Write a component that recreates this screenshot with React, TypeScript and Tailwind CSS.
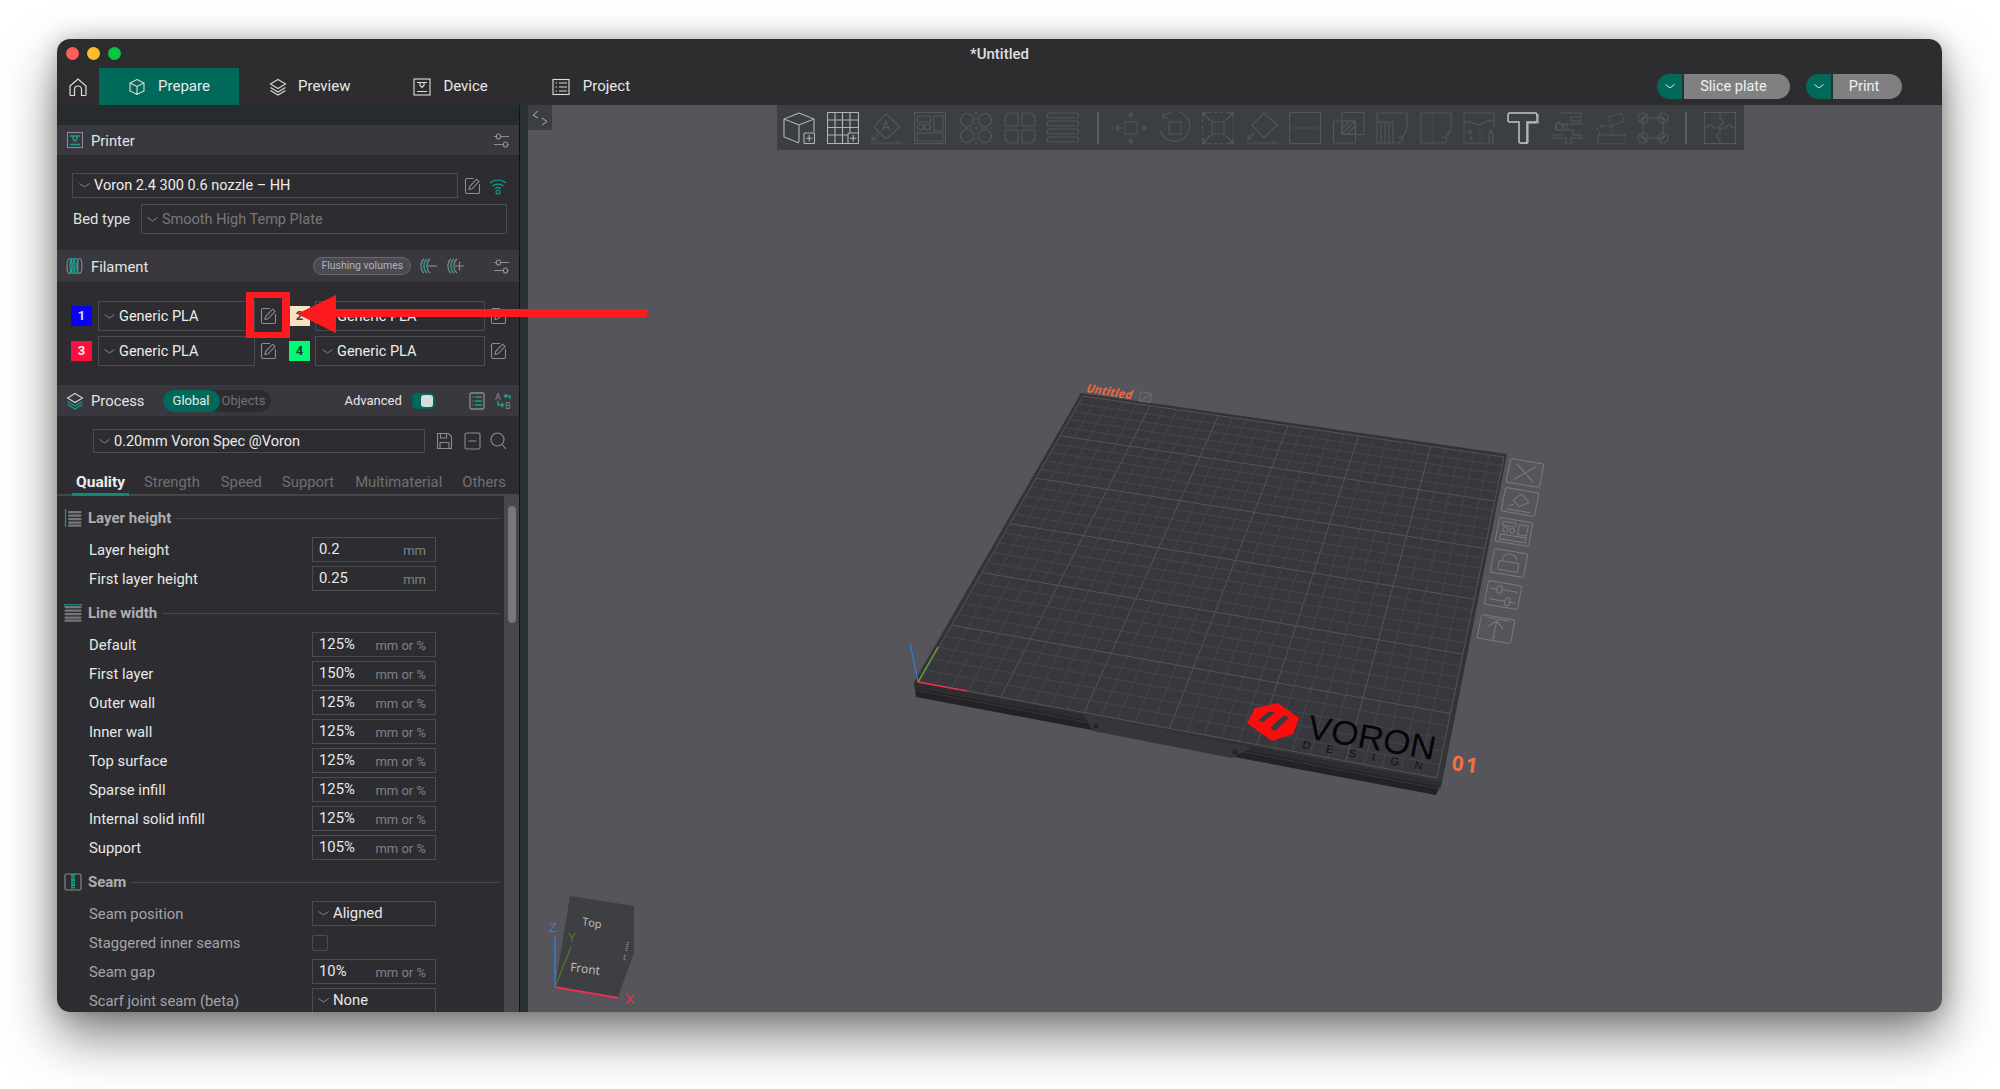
import type { ReactNode } from 'react';

const DIM = '#54575a';
const LIT = '#b4b4b4';

function Chevron() {
  return (
    <svg width="11" height="5" viewBox="0 0 11 5" fill="none" className="shrink-0">
      <path d="M0.5 0.5 5.5 4l5-3.5" stroke="#85858a" />
    </svg>
  );
}

function EditIcon() {
  return (
    <svg width="17" height="18" viewBox="0 0 17 18" fill="none" stroke="#8c8c90" strokeWidth="1.1">
      <path d="M10 1.5H3A1.5 1.5 0 0 0 1.5 3v12A1.5 1.5 0 0 0 3 16.5h11a1.5 1.5 0 0 0 1.5-1.5V7" />
      <path d="M5 12.5l.6-3L12.6 2.2l2.4 2.4-7 7.2z" />
    </svg>
  );
}

function SlidersIcon() {
  return (
    <svg width="17" height="17" viewBox="0 0 17 17" fill="none" stroke="#8f8f93" strokeWidth="1.1">
      <path d="M1 4.5h2.5M7.5 4.5H16M1 12.5h9.5M14.5 12.5H16" />
      <rect x="3.5" y="2" width="4" height="5" rx="2" />
      <rect x="10.5" y="10" width="4" height="5" rx="2" />
    </svg>
  );
}

function Ic({ size = 18, children }: { size?: number; children: ReactNode }) {
  return (
    <svg width={size} height={size} viewBox="0 0 18 18" fill="none" strokeWidth="1.1" className="shrink-0">
      {children}
    </svg>
  );
}

function PrinterIcon() {
  return (
    <Ic>
      <rect x="1.5" y="1.5" width="15" height="15" stroke="#8c8c90" />
      <path d="M4 5h10M7 5v3l2 2 2-2V5M4 13.5h10" stroke="#13a08c" strokeWidth="1.5" />
    </Ic>
  );
}

function FilamentIcon() {
  return (
    <Ic>
      <ellipse cx="3.5" cy="9" rx="2.5" ry="7.5" stroke="#8c8c90" />
      <ellipse cx="6.5" cy="9" rx="2.5" ry="7.5" stroke="#13a08c" strokeWidth="1.4" />
      <ellipse cx="9.5" cy="9" rx="2.5" ry="7.5" stroke="#13a08c" strokeWidth="1.4" />
      <ellipse cx="13.5" cy="9" rx="2.5" ry="7.5" stroke="#8c8c90" />
    </Ic>
  );
}

function FilamentEditIcon({ plus }: { plus?: boolean }) {
  return (
    <Ic>
      <path d="M5 2C1 5 1 13 5 16" stroke="#8c8c90" />
      <path d="M8 2C4 5 4 13 8 16" stroke="#13a08c" strokeWidth="1.6" />
      <path d="M11 2C7 5 7 13 11 16" stroke="#8c8c90" />
      <path d={plus ? 'M9 9h9M13.5 4.5v9' : 'M9 9h9'} stroke="#8c8c90" />
    </Ic>
  );
}

function LayersIcon({ accent = '#d6d6d6' }: { accent?: string }) {
  return (
    <Ic>
      <path d="M9 1.5 16.5 6 9 10.5 1.5 6z" stroke="#d6d6d6" />
      <path d="M1.5 9.5 9 14l7.5-4.5" stroke={accent} />
      <path d="M1.5 12.5 9 17l7.5-4.5" stroke={accent} />
    </Ic>
  );
}

function SectionIcon({ kind }: { kind: 'layer' | 'line' | 'seam' }) {
  if (kind === 'seam') {
    return (
      <Ic>
        <rect x="1" y="1" width="16" height="16" rx="1.5" stroke="#8c8c90" />
        <path d="M7 2h4M7 4.5h4M7 7h4M7 9.5h4M7 12h4M7 14.5h4" stroke="#0f9c88" strokeWidth="1.8" />
      </Ic>
    );
  }
  return (
    <Ic>
      {[3, 6.5, 10, 13.5, 16.5].map((y) => (
        <rect key={y} x={kind === 'layer' ? 4 : 0.5} y={y - 1} width={kind === 'layer' ? 13.5 : 17} height="2.2" rx="1" fill="#77777b" />
      ))}
      {kind === 'layer' ? (
        <path d="M1.5 1v16M.5 1h2M.5 17h2" stroke="#13a08c" />
      ) : (
        <path d="M.5 .7h17M.5 0v1.5M17.5 0v1.5" stroke="#13a08c" />
      )}
    </Ic>
  );
}

function Select({ text, w, dim, pad = 5 }: { text: string; w: string; dim?: boolean; pad?: number }) {
  return (
    <div className={`flex h-full items-center gap-[4px] border border-[#4b4b50] text-[14.5px] ${w} ${dim ? 'text-[#77777b]' : 'text-[#ececec]'}`} style={{ paddingLeft: pad }}>
      <Chevron />
      <span className="whitespace-nowrap pt-[1px]">{text}</span>
    </div>
  );
}

function SectionHead({ icon, title, height, tight, children }: { icon: ReactNode; title: string; height: string; tight?: boolean; children?: ReactNode }) {
  return (
    <div className={`flex shrink-0 items-center bg-[#38383e] pl-[9px] ${height}`}>
      {icon}
      <span className={`ml-[7px] text-[14.8px] text-[#e4e4e4] ${tight ? 'pt-[1px]' : 'pt-[3px]'}`}>{title}</span>
      {children}
    </div>
  );
}

function Swatch({ n, bg, fg }: { n: number; bg: string; fg: string }) {
  return (
    <div className={`flex h-[20px] w-[21px] shrink-0 items-center justify-center text-[13px] font-bold ${bg} ${fg}`}>{n}</div>
  );
}

function FilamentRow({ a, b }: { a: [number, string, string]; b: [number, string, string] }) {
  return (
    <div className="flex h-[30px] items-center pl-[14px]">
      <Swatch n={a[0]} bg={a[1]} fg={a[2]} />
      <div className="ml-[6px] h-full"><Select text="Generic PLA" w="w-[157px]" /></div>
      <div className="ml-[5px] w-[17px]"><EditIcon /></div>
      <div className="ml-[12px]"><Swatch n={b[0]} bg={b[1]} fg={b[2]} /></div>
      <div className="ml-[5px] h-full"><Select text="Generic PLA" w="w-[170px]" pad={6} /></div>
      <div className="ml-[5px] w-[17px]"><EditIcon /></div>
    </div>
  );
}

function GroupHead({ kind, title }: { kind: 'layer' | 'line' | 'seam'; title: string }) {
  return (
    <div className="mt-[10px] mb-[7px] flex h-[24px] items-center pl-[7px] pr-[5px]">
      <SectionIcon kind={kind} />
      <span className="ml-[6px] text-[15px] font-bold text-[#adadb0]">{title}</span>
      <div className="ml-[5px] h-px flex-1 bg-[#48484d]" />
    </div>
  );
}

function Row({ label, dim, children }: { label: string; dim?: boolean; children: ReactNode }) {
  return (
    <div className="mb-[4px] flex h-[25px] items-center pl-[32px]">
      <span className={`w-[223px] whitespace-nowrap pt-[1px] text-[14.8px] ${dim ? 'text-[#a4a4a8]' : 'text-[#e8e8e8]'}`}>{label}</span>
      {children}
    </div>
  );
}

function Field({ label, value, unit, dim }: { label: string; value: string; unit: string; dim?: boolean }) {
  return (
    <Row label={label} dim={dim}>
      <div className="flex h-[25px] w-[124px] items-center justify-between border border-[#4b4b50] pl-[6px] pr-[9px]">
        <span className="-mt-[1px] text-[14.8px] text-[#e8e8e8]">{value}</span>
        <span className="mt-[2px] text-[13px] text-[#808084]">{unit}</span>
      </div>
    </Row>
  );
}

function DropField({ label, value }: { label: string; value: string }) {
  return (
    <Row label={label} dim>
      <div className="flex h-[25px] w-[124px] items-center gap-[4px] border border-[#4b4b50] pl-[5px] text-[14.8px] text-[#e8e8e8]">
        <Chevron />
        <span>{value}</span>
      </div>
    </Row>
  );
}

function Sidebar() {
  return (
    <aside className="flex h-full w-[463px] shrink-0 flex-col overflow-hidden border-r border-[#111214] bg-[#2d2d31]">
      <div className="h-[20px] shrink-0 bg-[#262b2d]" />
      <SectionHead icon={<PrinterIcon />} title="Printer" height="h-[30px]">
        <div className="ml-auto mr-[9px]"><SlidersIcon /></div>
      </SectionHead>

      <div className="h-[95px] shrink-0 pt-[18px]">
        <div className="flex h-[25px] items-center pl-[15px]">
          <Select text="Voron 2.4 300 0.6 nozzle – HH" w="w-[386px]" pad={6} />
          <div className="ml-[6px]"><EditIcon /></div>
          <svg width="18" height="18" viewBox="0 0 18 18" fill="none" stroke="#0f9c88" strokeWidth="1.1" className="ml-[8px]">
            <path d="M1 6c4.5-4 11.5-4 16 0M3.5 9c3-2.5 8-2.5 11 0M6 11.5c1.8-1.3 4.200-1.300 6 0" />
            <circle cx="9" cy="15" r="2" />
          </svg>
        </div>
        <div className="mt-[6px] flex h-[30px] items-center pl-[16px]">
          <span className="w-[68px] pt-[1px] text-[14.8px] text-[#e0e0e0]">Bed type</span>
          <Select text="Smooth High Temp Plate" w="w-[366px]" dim />
        </div>
      </div>

      <SectionHead icon={<FilamentIcon />} title="Filament" height="h-[32px]">
        <div className="ml-[165px] flex h-[18px] w-[98px] items-center justify-center rounded-full border border-[#68686d] bg-[#4a4a50] text-[10.5px] text-[#b4b4b8]">Flushing volumes</div>
        <div className="ml-[8px]"><FilamentEditIcon /></div>
        <div className="ml-[9px]"><FilamentEditIcon plus /></div>
        <div className="ml-auto mr-[9px]"><SlidersIcon /></div>
      </SectionHead>

      <div className="flex h-[103px] shrink-0 flex-col gap-[5px] pt-[19px]">
        <FilamentRow a={[1, 'bg-[#0b00f6]', 'text-[#d8d8ff]']} b={[2, 'bg-[#f7e2c4]', 'text-[#44403a]']} />
        <FilamentRow a={[3, 'bg-[#fb0f3c]', 'text-[#ffe4e4]']} b={[4, 'bg-[#00fa78]', 'text-[#15402a]']} />
      </div>

      <SectionHead icon={<LayersIcon accent="#13a08c" />} title="Process" height="h-[31px]" tight>
        <div className="ml-[18px] flex h-[22px] w-[108px] items-center rounded-full bg-[#2c2c30] text-[13px]">
          <span className="flex h-full w-[57px] items-center justify-center rounded-full bg-[#00695a] text-[#ececec]">Global</span>
          <span className="ml-[2px] text-[#727276]">Objects</span>
        </div>
        <span className="ml-[74px] text-[13px] text-[#e6e6e6]">Advanced</span>
        <div className="ml-[10px] flex h-[16px] w-[23px] items-center justify-end rounded-[5px] bg-[#00695a] pr-[2px]">
          <div className="h-[12px] w-[12px] rounded-[3px] bg-[#d6dedc]" />
        </div>
        <svg width="16" height="18" viewBox="0 0 16 18" fill="none" stroke="#8c8c90" strokeWidth="1.3" className="ml-[34px]">
          <rect x="1" y="1" width="14" height="16" rx="1.5" />
          <path d="M3.5 5h1M6 5h7M3.5 9h1M6 9h7M3.5 13h1M6 13h7" stroke="#13a08c" />
        </svg>
        <svg width="17" height="18" viewBox="0 0 17 18" fill="none" strokeWidth="1.5" className="ml-[10px]">
          <text x="0" y="8" fontSize="9" fill="#8c8c90" stroke="none">A</text>
          <text x="10" y="17" fontSize="9" fill="#8c8c90" stroke="none">B</text>
          <path d="M15 7V4H9.5M11.5 2l-2 2 2 2M3 9v4h5.5M6.5 11l2 2-2 2" stroke="#13a08c" />
        </svg>
      </SectionHead>

      <div className="mt-[13px] flex h-[24px] shrink-0 items-center pl-[36px]">
        <Select text="0.20mm Voron Spec @Voron" w="w-[332px]" />
        <svg width="17" height="18" viewBox="0 0 17 18" fill="none" stroke="#8c8c90" strokeWidth="1.1" className="ml-[11px]">
          <path d="M1.5 1.5h11l3 3v12h-14z" />
          <path d="M4.5 1.5v4.5h6V1.5M4 16.5v-6h9v6" />
        </svg>
        <svg width="17" height="18" viewBox="0 0 17 18" fill="none" stroke="#8c8c90" strokeWidth="1.1" className="ml-[11px]">
          <rect x="1" y="1" width="15" height="16" rx="1.5" />
          <path d="M4.5 9h8" />
        </svg>
        <svg width="17" height="18" viewBox="0 0 17 18" fill="none" stroke="#8c8c90" strokeWidth="1.1" className="ml-[9px]">
          <circle cx="7.5" cy="7.5" r="6.5" />
          <path d="M12 12.5l4 4.5" />
        </svg>
      </div>

      <div className="mt-[14px] flex h-[29px] shrink-0 border-b-2 border-[#45454a] pl-[15px] pt-[4px] text-[14.8px] text-[#6f6f74]">
        <div className="-mb-[2px] flex w-[57px] justify-center border-b-[3px] border-[#0f8a78] text-[15.5px] font-bold text-[#ececec]">Quality</div>
        <span className="ml-[15px]">Strength</span>
        <span className="ml-[21px]">Speed</span>
        <span className="ml-[20px]">Support</span>
        <span className="ml-[21px]">Multimaterial</span>
        <span className="ml-[20px]">Others</span>
      </div>

      <div className="flex min-h-0 flex-1">
        <div className="flex-1">
          <GroupHead kind="layer" title="Layer height" />
          <Field label="Layer height" value="0.2" unit="mm" />
          <Field label="First layer height" value="0.25" unit="mm" />
          <GroupHead kind="line" title="Line width" />
          <Field label="Default" value="125%" unit="mm or %" />
          <Field label="First layer" value="150%" unit="mm or %" />
          <Field label="Outer wall" value="125%" unit="mm or %" />
          <Field label="Inner wall" value="125%" unit="mm or %" />
          <Field label="Top surface" value="125%" unit="mm or %" />
          <Field label="Sparse infill" value="125%" unit="mm or %" />
          <Field label="Internal solid infill" value="125%" unit="mm or %" />
          <Field label="Support" value="105%" unit="mm or %" />
          <GroupHead kind="seam" title="Seam" />
          <DropField label="Seam position" value="Aligned" />
          <Row label="Staggered inner seams" dim>
            <div className="h-[16px] w-[16px] rounded-[2px] border border-[#4b4b50]" />
          </Row>
          <Field label="Seam gap" value="10%" unit="mm or %" dim />
          <DropField label="Scarf joint seam (beta)" value="None" />
        </div>
        <div className="w-[15px] shrink-0 bg-[#48484c] pl-[4px] pt-[10px]">
          <div className="h-[117px] w-[8px] rounded-full bg-[#78787c]" />
        </div>
      </div>
    </aside>
  );
}

function ToolIcon({ children, color = DIM, className = '' }: { children: ReactNode; color?: string; className?: string }) {
  return (
    <svg width="32" height="32" viewBox="0 0 32 32" fill="none" stroke={color} strokeWidth="1.1" className={`shrink-0 ${className}`}>
      {children}
    </svg>
  );
}

const PlusBadge = () => (
  <>
    <rect x="21" y="21" width="10.5" height="10.5" rx="1" fill="#3b3f41" />
    <path d="M23 26.2h6.5M26.2 23v6.5" />
  </>
);

const tools: ReactNode[] = [
  <ToolIcon key="a" color={LIT}>
    <path d="M16 1 31 7v13M16 1 1 7v18l15 6M1 7l15 6 15-6M16 13v17" />
    <PlusBadge />
  </ToolIcon>,
  <ToolIcon key="b" color={LIT}>
    <rect x=".5" y=".5" width="31" height="31" rx="1" />
    <path d="M.5 8h31M.5 15.5h31M.5 23h20M8 .5v31M15.5 .5v31M23 .5v20" />
    <PlusBadge />
  </ToolIcon>,
  <ToolIcon key="c">
    <path d="M16 2 30 15 16 27 4 15z" />
    <path d="M12 19l4-10 4 10M13.5 15.5h5M1 31h31M9 21l-7 7M2 23v5h5" />
  </ToolIcon>,
  <ToolIcon key="d">
    <rect x=".5" y=".5" width="31" height="31" />
    <rect x="3" y="4" width="14" height="6" rx="3" />
    <rect x="20" y="4" width="9" height="15" />
    <circle cx="6.5" cy="15" r="3" />
    <circle cx="13.5" cy="15" r="3" />
    <rect x="3" y="21" width="26" height="8" />
  </ToolIcon>,
  <ToolIcon key="e" className="ml-[3px]">
    <circle cx="7" cy="8" r="6.5" />
    <circle cx="25" cy="8" r="6.5" />
    <circle cx="7" cy="24" r="6.5" />
    <circle cx="25" cy="24" r="6.5" />
    <path d="M16 0v32M0 16h32" strokeDasharray="3 2" />
  </ToolIcon>,
  <ToolIcon key="f">
    <path d="M14 1H7a6 6 0 0 0-6 6v7h13zM18 1h7a6 6 0 0 1 6 6v7H18zM14 31H7a6 6 0 0 1-6-6v-7h13zM18 31h7a6 6 0 0 0 6-6v-7H18z" />
  </ToolIcon>,
  <ToolIcon key="g">
    {[1, 9, 17, 25].map((y) => (
      <rect key={y} x=".5" y={y} width="31" height="5" rx="1.5" />
    ))}
  </ToolIcon>,
  <div key="sep1" className="ml-[6px] mr-[5px] h-[32px] w-[2px] shrink-0 bg-[#595c5e]" />,
  <ToolIcon key="h">
    <rect x="10" y="10" width="12" height="12" />
    <path d="M16 1v6M16 25v6M1 16h6M25 16h6M13 4l3-3 3 3M13 28l3 3 3-3M4 13l-3 3 3 3M28 13l3 3-3 3" />
  </ToolIcon>,
  <ToolIcon key="i">
    <rect x="10" y="10" width="12" height="12" />
    <path d="M4 5a15 15 0 1 1-2.5 14M4 1v5h5" />
  </ToolIcon>,
  <ToolIcon key="j">
    <rect x=".5" y=".5" width="31" height="31" strokeDasharray="3 3" />
    <rect x="10" y="10" width="12" height="12" />
    <path d="M1 1l8 8M31 1l-8 8M1 31l8-8M31 31l-8-8M1 6V1h5M26 1h5v5M1 26v5h5M31 26v5h-5" />
  </ToolIcon>,
  <ToolIcon key="k">
    <path d="M18 1 31 13 18 26 6 13z" />
    <path d="M1 31h31M8 21l-6 6M2 23v4h4" />
  </ToolIcon>,
  <ToolIcon key="l">
    <rect x=".5" y=".5" width="31" height="31" rx="1" />
    <path d="M.5 16h31" strokeDasharray="4 2" />
  </ToolIcon>,
  <ToolIcon key="m">
    <rect x="9" y=".5" width="22" height="22" rx="1" />
    <rect x=".5" y="9" width="22" height="22" rx="1" />
    <path d="M10 21l11-11M10 16l6-6M15 21l7-7M9 9h13v13H9z" />
  </ToolIcon>,
  <ToolIcon key="n">
    <path d="M20 31H1V1h30v15M5 31V10M9 31V10M13 31V10M1 10h16v21" />
    <path d="M31 17l-5 9M22 26c3-2 6 0 4 3-1 2-4 2-5 2" />
  </ToolIcon>,
  <ToolIcon key="o">
    <path d="M20 31H1V1h30v15" />
    <path d="M12 2l2 4-2 4 2 4-2 4 2 4-2 4 1 4" strokeDasharray="1.5 1.5" />
    <path d="M31 17l-5 9M22 26c3-2 6 0 4 3-1 2-4 2-5 2" />
  </ToolIcon>,
  <ToolIcon key="p">
    <path d="M24 31H1V1h30v14" />
    <path d="M1 12c6-7 12 4 17 0s9-4 13-3" />
    <circle cx="7" cy="20" r="1.5" />
    <circle cx="8" cy="26" r="1" />
    <path d="M16 20l5-1M16 23l5 0M16 26l5 1" strokeDasharray="1 1" />
    <path d="M26 31v-9l2-4 2 4v9z" />
  </ToolIcon>,
  <ToolIcon key="q" color="#c4c4c4">
    <path d="M2 1h27l1 2v6l-1 1H20v20l-1 1h-6l-1-1V10H2L1 9V3z" strokeWidth="1.5" />
    <path d="M30 3h2v7l-1 1H21v20l-2 1h-5" strokeWidth="1" />
  </ToolIcon>,
  <ToolIcon key="r">
    <path d="M9 1h22v4H21v4h10v3H9M14 12v6h-4a3 3 0 0 1 0-8M17 12v6M13 18h10v5h8v3H21v6h-5v-6H3v-3h10" />
    <circle cx="9" cy="15" r="3.5" />
  </ToolIcon>,
  <ToolIcon key="s">
    <rect x="4" y="23" width="28" height="9" />
    <path d="M14 5l13-4 3 8-13 5zM8 14h10v9M8 14l-5 3 4 6" strokeDasharray="3 1.5" />
  </ToolIcon>,
  <ToolIcon key="t">
    <rect x="6" y="6" width="20" height="20" />
    <circle cx="6" cy="6" r="5" />
    <circle cx="26" cy="6" r="5" />
    <circle cx="6" cy="26" r="5" />
    <circle cx="26" cy="26" r="5" />
    <path d="M3 9l6-6M23 3l6 6M3 23l6 6M23 29l6-6" />
  </ToolIcon>,
  <div key="sep2" className="ml-[4px] mr-[6px] h-[32px] w-[2px] shrink-0 bg-[#595c5e]" />,
  <ToolIcon key="u">
    <rect x=".5" y=".5" width="31" height="31" />
    <path d="M16 1v6a3 3 0 0 1 0 6v3H9a3 3 0 0 0-6 0H1M16 16h6a3 3 0 0 1 6 0h3M16 16v5a3 3 0 0 0 0 6v4" />
  </ToolIcon>,
];

function homography(q: number[][]) {
  const [[x0, y0], [x1, y1], [x2, y2], [x3, y3]] = q;
  const dx1 = x1 - x2, dx2 = x3 - x2, sx = x0 - x1 + x2 - x3;
  const dy1 = y1 - y2, dy2 = y3 - y2, sy = y0 - y1 + y2 - y3;
  const den = dx1 * dy2 - dx2 * dy1;
  const g = (sx * dy2 - dx2 * sy) / den;
  const h = (dx1 * sy - sx * dy1) / den;
  const a = x1 - x0 + g * x1, b = x3 - x0 + h * x3;
  const d = y1 - y0 + g * y1, e = y3 - y0 + h * y3;
  return (u: number, v: number) => {
    const w = g * u + h * v + 1;
    return [(a * u + b * v + x0) / w, (d * u + e * v + y0) / w];
  };
}

const plateMap = homography([[1083, 396], [1504, 457], [1437, 778], [919, 682]]);
const cells = Array.from({ length: 31 }, (_, i) => i);

function lineBetween(p: number[], q: number[]) {
  return { x1: p[0], y1: p[1], x2: q[0], y2: q[1] };
}

const BED_M = 'matrix(0.98,0.16,-0.19,0.98,';

function BedButton({ x, y, children }: { x: number; y: number; children: ReactNode }) {
  return (
    <g transform={`${BED_M}${x},${y})`} fill="none" stroke="#7a7a7f" strokeWidth="1">
      <rect x="-17" y="-12" width="34" height="24" rx="2" />
      {children}
    </g>
  );
}

function Viewport() {
  return (
    <svg width="1414" height="907" viewBox="528 105 1414 907" className="absolute inset-0">
      {/* bed */}
      <path d="M914 682 916 697 1436 795 1442 782z" fill="#232326" />
      <path d="M914 682 915 688 1441 787 1442 782z" fill="#2d2d31" />
      <path d="M915 690 1441 789" stroke="#38383c" strokeWidth="1" />
      <path d="M914 682 1081 393 1507 454 1442 782z" fill="#333338" />
      <path d="M1083 714 1093 731 1232 758 1252 747z" fill="#35353a" />
      <path d="M919 682 1083 396 1504 457 1437 778z" fill="#37373d" />
      {cells.map((i) => {
        const major = i % 5 === 0;
        const color = major ? '#545459' : '#46464c';
        const t = i / 30;
        return (
          <g key={i} stroke={color} strokeWidth="1">
            <line {...lineBetween(plateMap(t, 0), plateMap(t, 1))} />
            <line {...lineBetween(plateMap(0, t), plateMap(1, t))} />
          </g>
        );
      })}
      <circle cx="1096" cy="726" r="2.5" fill="#232326" />
      <circle cx="1235" cy="752" r="2.5" fill="#232326" />

      <line x1="918" y1="682" x2="910" y2="643" stroke="#2f7fd6" strokeWidth="1.2" />
      <line x1="918" y1="682" x2="938" y2="647" stroke="#62b32a" strokeWidth="1.2" />
      <line x1="918" y1="682" x2="967" y2="691" stroke="#e8304f" strokeWidth="1.5" />

      <g transform={`${BED_M}1086,392)`}>
        <text fontFamily="Open Sans, sans-serif" fontSize="12" fontStyle="italic" fontWeight="700" fill="#f0683c">Untitled</text>
        <rect x="54" y="-9" width="11" height="9" fill="none" stroke="#6e6e73" />
        <path d="M55 0l9-8" stroke="#6e6e73" />
      </g>

      {/* logo */}
      <path d="M1278 703 1299 718 1293 734 1272 741 1247 723 1255 708z" fill="#fb0d0d" />
      <path d="M1269 711.5 1275 712.5 1263 722 1258 720.5zM1284 715 1289 718 1275 731 1270 728z" fill="#3a3a40" />
      <g transform="matrix(0.98,0.17,-0.19,0.98,1306,738)">
        <text fontFamily="Liberation Sans, sans-serif" fontSize="34" fill="#060606" textLength="130" lengthAdjust="spacingAndGlyphs">VORON</text>
      </g>
      <g transform="matrix(0.98,0.18,-0.19,0.98,1302,748)">
        <text fontFamily="Liberation Sans, sans-serif" fontSize="11" fill="#101012" letterSpacing="16">DESIGN</text>
      </g>
      <g transform="matrix(0.99,0.12,-0.12,0.99,1451,770)">
        <text fontFamily="Open Sans, sans-serif" fontSize="21" fontWeight="700" fill="#f0703f" letterSpacing="2">01</text>
      </g>

      {/* bed buttons */}
      <BedButton x={1525} y={473}>
        <path d="M-10-8 10 8M10-8-10 8" />
      </BedButton>
      <BedButton x={1520} y={502}>
        <path d="M0-8 9-1 0 5-7-1zM-12 9H12M-6 3-11 6" />
      </BedButton>
      <BedButton x={1514} y={532}>
        <rect x="-13" y="-9" width="14" height="4" rx="2" />
        <rect x="4" y="-8" width="9" height="10" />
        <circle cx="-9" cy="-1" r="2.5" />
        <circle cx="-2" cy="-1" r="2.5" />
        <rect x="-13" y="4" width="26" height="5" />
      </BedButton>
      <BedButton x={1509} y={563}>
        <rect x="-10" y="-1" width="20" height="9" rx="1" />
        <path d="M-7-1v-3a7 5 0 0 1 14 0" />
      </BedButton>
      <BedButton x={1503} y={595}>
        <path d="M-13-5H-7M-2-5H14M-13 6H3M8 6H14" />
        <rect x="-7" y="-9" width="5" height="8" rx="2.5" />
        <rect x="3" y="2" width="5" height="8" rx="2.5" />
      </BedButton>
      <BedButton x={1496} y={629}>
        <path d="M-13-10H11M-1-8V11M-9-1-1-8 7-1" />
      </BedButton>

      {/* view cube */}
      <path d="M570 896 634 906 634 953 618 997 555 987z" fill="#3e3f43" />
      <g transform="matrix(0.98,0.17,-0.1,0.99,582,925)">
        <text fontFamily="Open Sans, sans-serif" fontSize="11" fill="#c4c4c4">Top</text>
      </g>
      <g transform="matrix(0.98,0.13,-0.1,0.99,570,971)">
        <text fontFamily="Open Sans, sans-serif" fontSize="12" fill="#c4c4c4">Front</text>
      </g>
      <path d="M628 942 626 951M625 955 624 961" stroke="#8a8a8e" strokeWidth="2" strokeDasharray="1 1" />
      <line x1="555" y1="987" x2="555" y2="937" stroke="#2f7fd6" strokeWidth="1.5" />
      <line x1="555" y1="987" x2="571" y2="947" stroke="#4f7a2a" strokeWidth="1.2" />
      <line x1="555" y1="987" x2="618" y2="998" stroke="#e8304f" strokeWidth="1.8" />
      <text x="549" y="932" fontFamily="Liberation Sans, sans-serif" fontSize="13" fill="#2f7fd6">Z</text>
      <text x="568" y="942" fontFamily="Liberation Sans, sans-serif" fontSize="12" fill="#4f7a2a">Y</text>
      <text x="625" y="1004" fontFamily="Liberation Sans, sans-serif" fontSize="14" fill="#e8304f">X</text>
    </svg>
  );
}

function SplitButton({ label, w }: { label: string; w: string }) {
  return (
    <div className="flex h-[25px] items-stretch gap-[2px]">
      <div className="flex w-[25px] items-center justify-center rounded-l-full bg-[#00695a]">
        <svg width="10" height="5" viewBox="0 0 10 5" fill="none"><path d="M.5.5 5 4 9.5.5" stroke="#e6e6e6" /></svg>
      </div>
      <div className={`flex items-center justify-center rounded-r-full bg-[#808083] pr-[7px] text-[14.5px] text-[#f0f0f0] ${w}`}>{label}</div>
    </div>
  );
}

function TabIcon({ children }: { children: ReactNode }) {
  return (
    <svg width="18" height="18" viewBox="0 0 18 18" fill="none" stroke="#dcdcdc" strokeWidth="1.1" className="shrink-0">
      {children}
    </svg>
  );
}

export default function App() {
  return (
    <div className="relative h-[1089px] w-[2000px] overflow-hidden bg-white pl-[57px] pt-[39px] font-['Roboto',sans-serif]">
      <div className="flex h-[973px] w-[1885px] flex-col overflow-hidden rounded-[13px] shadow-[0_24px_52px_rgba(0,0,0,0.5),0_0_22px_rgba(0,0,0,0.22)]">
        <header className="relative h-[66px] shrink-0 bg-[#2d2d30]">
          <div className="flex h-[29px] items-center gap-[8.5px] pl-[9px]">
            <div className="h-[12.5px] w-[12.5px] rounded-full bg-[#ff5f57]" />
            <div className="h-[12.5px] w-[12.5px] rounded-full bg-[#febc2e]" />
            <div className="h-[12.5px] w-[12.5px] rounded-full bg-[#0ac53f]" />
          </div>
          <div className="absolute left-0 right-0 top-[4px] text-center text-[15px] font-medium text-[#e0e0e0]">*Untitled</div>
          <div className="flex h-[37px] items-stretch text-[15px] text-[#e8e8e8]">
            <div className="flex w-[42px] items-center justify-center">
              <svg width="20" height="20" viewBox="0 0 20 20" fill="none" stroke="#dcdcdc" strokeWidth="1.2">
                <path d="M2 9 10 2l8 7v8.5a1 1 0 0 1-1 1h-3.5V12.5a3.5 3.5 0 0 0-7 0V18.5H3a1 1 0 0 1-1-1z" />
              </svg>
            </div>
            <div className="flex w-[140px] items-center justify-center gap-[12px] bg-[#00695a]">
              <TabIcon><path d="M9 1.5 16 5v8l-7 3.5L2 13V5zM2 5l7 3.5L16 5M9 8.5v8" /></TabIcon>
              <span>Prepare</span>
            </div>
            <div className="ml-[30px] flex items-center gap-[11px]">
              <LayersIcon />
              <span>Preview</span>
            </div>
            <div className="ml-[63px] flex items-center gap-[12px]">
              <TabIcon>
                <rect x="1" y="1" width="16" height="16" />
                <path d="M4 4.5h10M7 4.5v3l2 2 2-2v-3M4 13.5h10" />
              </TabIcon>
              <span>Device</span>
            </div>
            <div className="ml-[64px] flex items-center gap-[13px]">
              <TabIcon>
                <rect x="1" y="1.5" width="16" height="15" />
                <path d="M3.5 5h1.5M7 5h8M3.5 9h1.5M7 9h8M3.5 13h1.5M7 13h8" />
              </TabIcon>
              <span>Project</span>
            </div>
            <div className="ml-auto mr-[40px] flex items-center gap-[16px]">
              <SplitButton label="Slice plate" w="w-[106px]" />
              <SplitButton label="Print" w="w-[69px]" />
            </div>
          </div>
        </header>

        <div className="flex min-h-0 flex-1">
          <Sidebar />
          <div className="w-[8px] shrink-0 bg-[#2a3133]" />
          <main className="relative flex-1 bg-[#55555b]">
            <Viewport />
            <div className="absolute left-0 top-0 flex h-[25px] w-[24px] items-center justify-center bg-[#3b3f41]">
              <svg width="16" height="16" viewBox="0 0 16 16" fill="none" stroke="#b0b0b0" strokeWidth="1">
                <path d="M6 1 1 5l5 3M10 8l5 3.5L10 15" />
              </svg>
            </div>
            <div className="absolute left-[249px] top-0 flex h-[45px] w-[967px] items-center gap-[11.5px] bg-[#3b3f41] pl-[6px]">
              {tools}
            </div>
          </main>
        </div>
      </div>

      {/* annotation */}
      <div className="absolute left-[246px] top-[292px] h-[46px] w-[44px] border-x-[8px] border-y-[6px] border-[#ff1a20]" />
      <svg width="352" height="40" viewBox="0 0 352 40" className="absolute left-[296px] top-[294px]">
        <path d="M1 20 40 1v14h311v8H40v16z" fill="#ff1a20" />
      </svg>
    </div>
  );
}
